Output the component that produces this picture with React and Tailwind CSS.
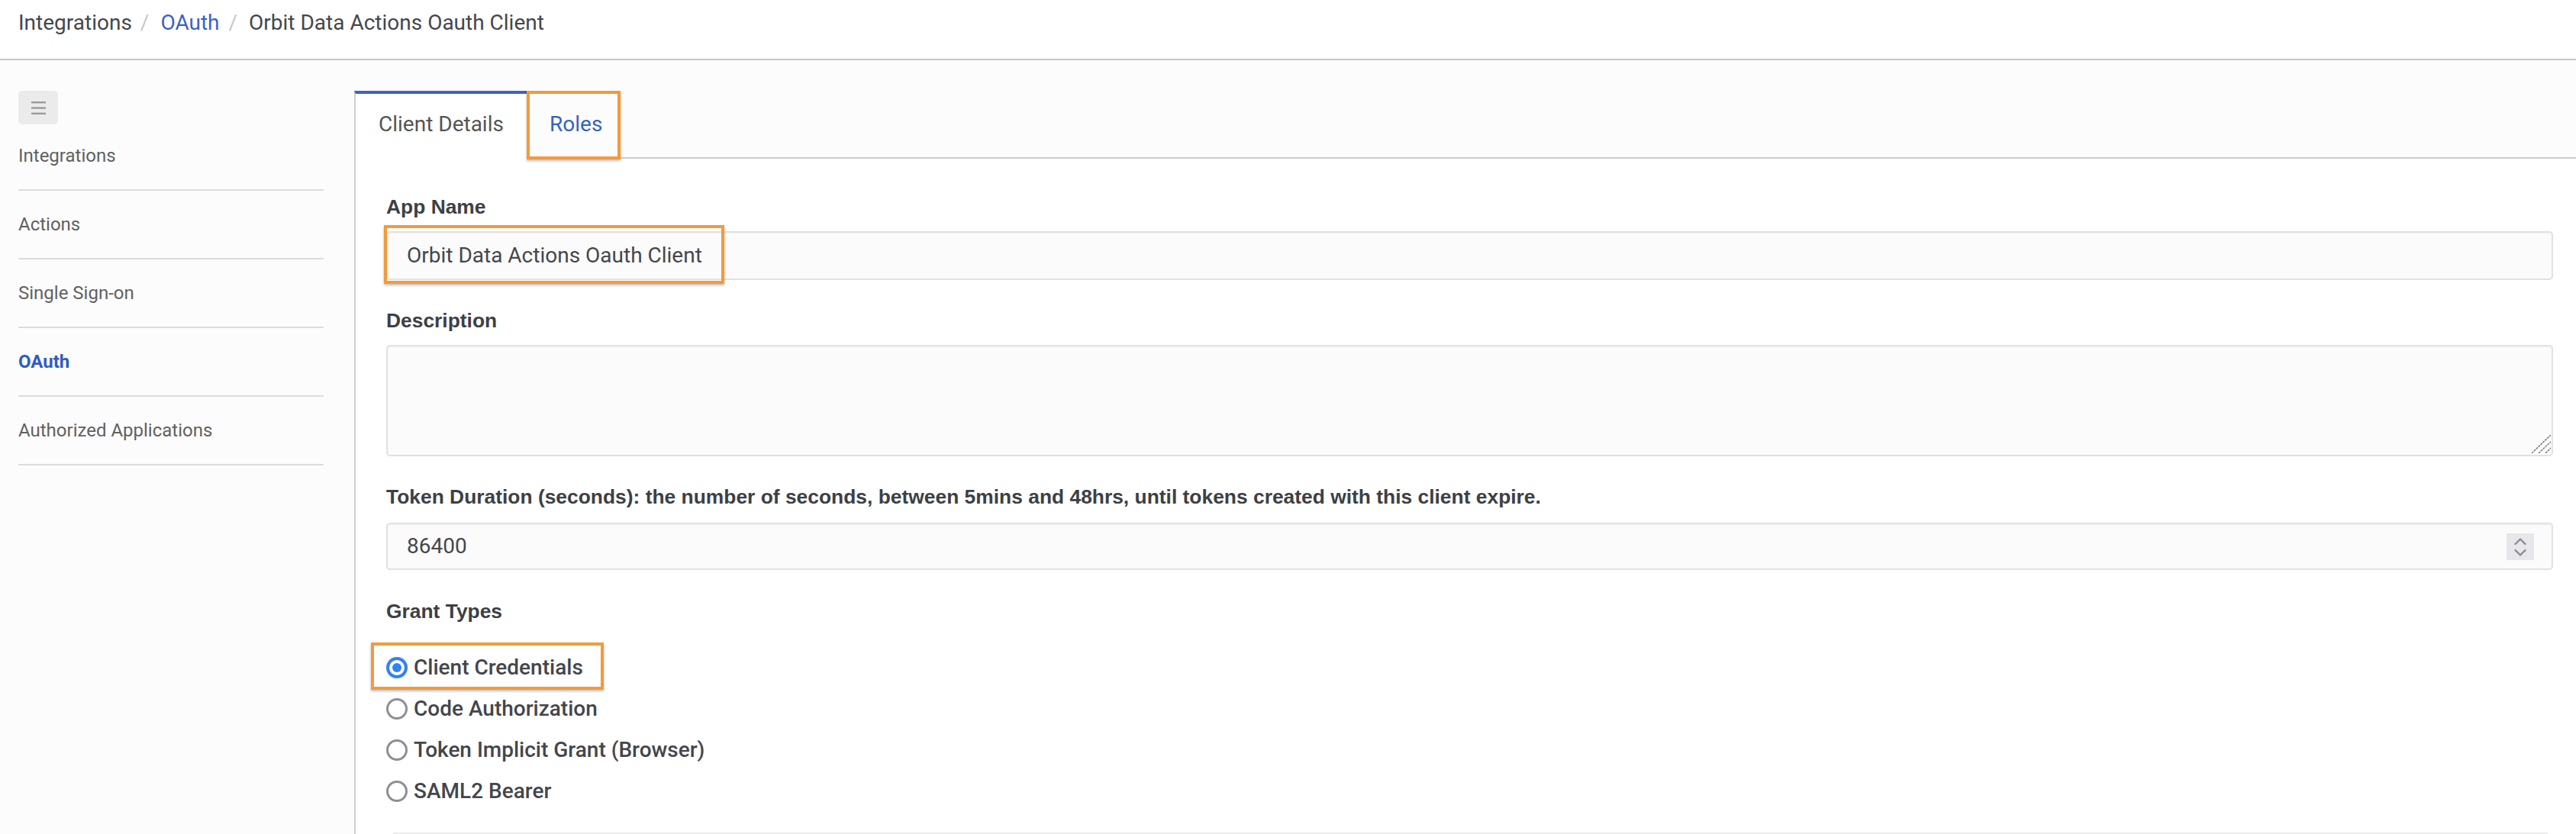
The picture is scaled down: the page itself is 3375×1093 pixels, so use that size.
import React from 'react';

const navItems = [
  { label: 'Integrations' },
  { label: 'Actions' },
  { label: 'Single Sign-on' },
  { label: 'OAuth', active: true },
  { label: 'Authorized Applications' },
];

const grantTypes = [
  { label: 'Client Credentials', checked: true },
  { label: 'Code Authorization' },
  { label: 'Token Implicit Grant (Browser)' },
  { label: 'SAML2 Bearer' },
];

// orange annotation box drawn over the element it marks
const Highlight = ({ className }) => (
  <span
    className={`pointer-events-none absolute border-4 border-[#f39a3b] shadow-[0_2px_3px_rgba(0,0,0,0.25)] ${className}`}
  />
);

const Radio = ({ checked }) =>
  checked ? (
    <span className="flex h-[28px] w-[28px] shrink-0 items-center justify-center rounded-full border-4 border-[#3182f6] bg-white">
      <span className="h-[12px] w-[12px] rounded-full bg-[#3182f6]" />
    </span>
  ) : (
    <span className="h-[28px] w-[28px] shrink-0 rounded-full border-[3px] border-[#8f8e94] bg-white" />
  );

const Label = ({ children, className = '' }) => (
  <div className={`font-['Liberation_Sans',Arial,sans-serif] text-[26.4px] font-bold leading-[26px] text-[#3d4045] ${className}`}>
    {children}
  </div>
);

const App = () => {
  return (
    <div className="min-h-screen bg-[#fcfcfc] font-['Roboto',sans-serif]">
      <header className="h-[79px] border-b-2 border-[#c8c8c8] bg-white pl-[24px] pt-[16px] text-[28px] leading-none text-[#45474c]">
        <nav className="flex items-center">
          <span>Integrations</span>
          <span className="ml-[11px] mr-[15px] text-[#c8c8c8]">/</span>
          <span className="text-[#3a63c5]">OAuth</span>
          <span className="ml-[12px] mr-[15px] text-[#c8c8c8]">/</span>
          <span>Orbit Data Actions Oauth Client</span>
        </nav>
      </header>

      <div className="flex pt-[40px]">
        <aside className="w-[464px] shrink-0 pl-[24px] pr-[40px]">
          <button className="flex h-[44px] w-[52px] items-center justify-center rounded-[5px] bg-[#ebebeb]">
            <svg width="19" height="17" viewBox="0 0 19 17">
              <rect x="0" y="0" width="19" height="2.4" fill="#9b9b9b" />
              <rect x="0" y="7.3" width="19" height="2.4" fill="#9b9b9b" />
              <rect x="0" y="14.6" width="19" height="2.4" fill="#9b9b9b" />
            </svg>
          </button>
          <ul className="-mt-[3px]">
            {navItems.map((item) => (
              <li
                key={item.label}
                className={`border-b-2 border-[#dcdcdc] py-[32px] text-[24px] leading-none ${
                  item.active ? 'font-bold text-[#2f5bc4]' : 'text-[#616161]'
                }`}
              >
                {item.label}
              </li>
            ))}
          </ul>
        </aside>

        <main className="flex min-w-0 flex-1 flex-col">
          {/* tabs */}
          <div className="flex h-[89px] text-[28px] leading-none">
            <div className="w-[226px] border-l-2 border-t-4 border-l-[#cfcfcf] border-t-[#3a64c1] bg-white pl-[30px] pt-[26px] text-[#555555]">
              Client Details
            </div>
            <div className="relative w-[123px] border-b-2 border-[#cccccc] pl-[30px] pt-[30px] text-[#3263c6]">
              Roles
              <Highlight className="-bottom-[3px] left-0 right-0 top-0" />
            </div>
            <div className="flex-1 border-b-2 border-[#cccccc]" />
          </div>

          {/* panel */}
          <div className="flex-1 border-l-2 border-[#cfcfcf] bg-white pl-[40px] pr-[30px] pt-[50px]">
            <Label className="mb-[19px]">App Name</Label>
            <div className="relative flex h-[64px] items-center rounded-[5px] border-2 border-[#dfe2e6] bg-[#fbfbfb] pl-[25px] text-[28px] text-[#45474b] shadow-[inset_0_1px_2px_rgba(0,0,0,0.05)]">
              Orbit Data Actions Oauth Client
              <Highlight className="-bottom-[7px] -left-[5px] -top-[10px] w-[446px]" />
            </div>

            <Label className="mb-[19px] mt-[40px]">Description</Label>
            <div className="relative">
              <textarea
                readOnly
                className="block h-[146px] w-full resize-none rounded-[5px] border-2 border-[#dfe2e6] bg-[#fbfbfb] shadow-[inset_0_1px_2px_rgba(0,0,0,0.05)] outline-none"
              />
              <svg className="absolute bottom-[4px] right-[3px]" width="26" height="24" viewBox="0 0 26 24">
                <path d="M1 24 L26 0 M10 24 L26 9 M19 24 L26 17" stroke="#7a7a7a" strokeWidth="1.5" strokeDasharray="3 1" />
              </svg>
            </div>

            <Label className="mb-[21px] mt-[40px]">
              Token Duration (seconds): the number of seconds, between 5mins and 48hrs, until tokens created with this client expire.
            </Label>
            <div className="flex h-[62px] items-center justify-between rounded-[5px] border-2 border-[#dfe2e6] bg-[#fbfbfb] pl-[25px] pr-[23px] text-[28px] text-[#45474b] shadow-[inset_0_1px_2px_rgba(0,0,0,0.05)]">
              <span>86400</span>
              <span className="flex h-[35px] w-[36px] items-center justify-center bg-[#e7e7eb]">
                <svg width="36" height="35" viewBox="0 0 36 35">
                  <path d="M11.5 14 L18 7.5 L24.5 14" fill="none" stroke="#8c8c90" strokeWidth="2.4" strokeLinecap="round" strokeLinejoin="round" />
                  <path d="M11.5 22 L18 28.5 L24.5 22" fill="none" stroke="#8c8c90" strokeWidth="2.4" strokeLinecap="round" strokeLinejoin="round" />
                </svg>
              </span>
            </div>

            <Label className="mt-[41px]">Grant Types</Label>
            <div className="mt-[34px]">
              {grantTypes.map((g) => (
                <label
                  key={g.label}
                  className="relative flex h-[54px] items-center gap-[8px] text-[28px] font-medium leading-none text-[#43464c]"
                >
                  <Radio checked={g.checked} />
                  <span>{g.label}</span>
                  {g.checked && <Highlight className="-bottom-[2px] -left-[20px] -top-[6px] w-[305px]" />}
                </label>
              ))}
            </div>

            <div className="ml-[9px] mr-[7px] mt-[27px] border-t-2 border-[#ececec]" />
          </div>
        </main>
      </div>
    </div>
  );
};

export default App;
